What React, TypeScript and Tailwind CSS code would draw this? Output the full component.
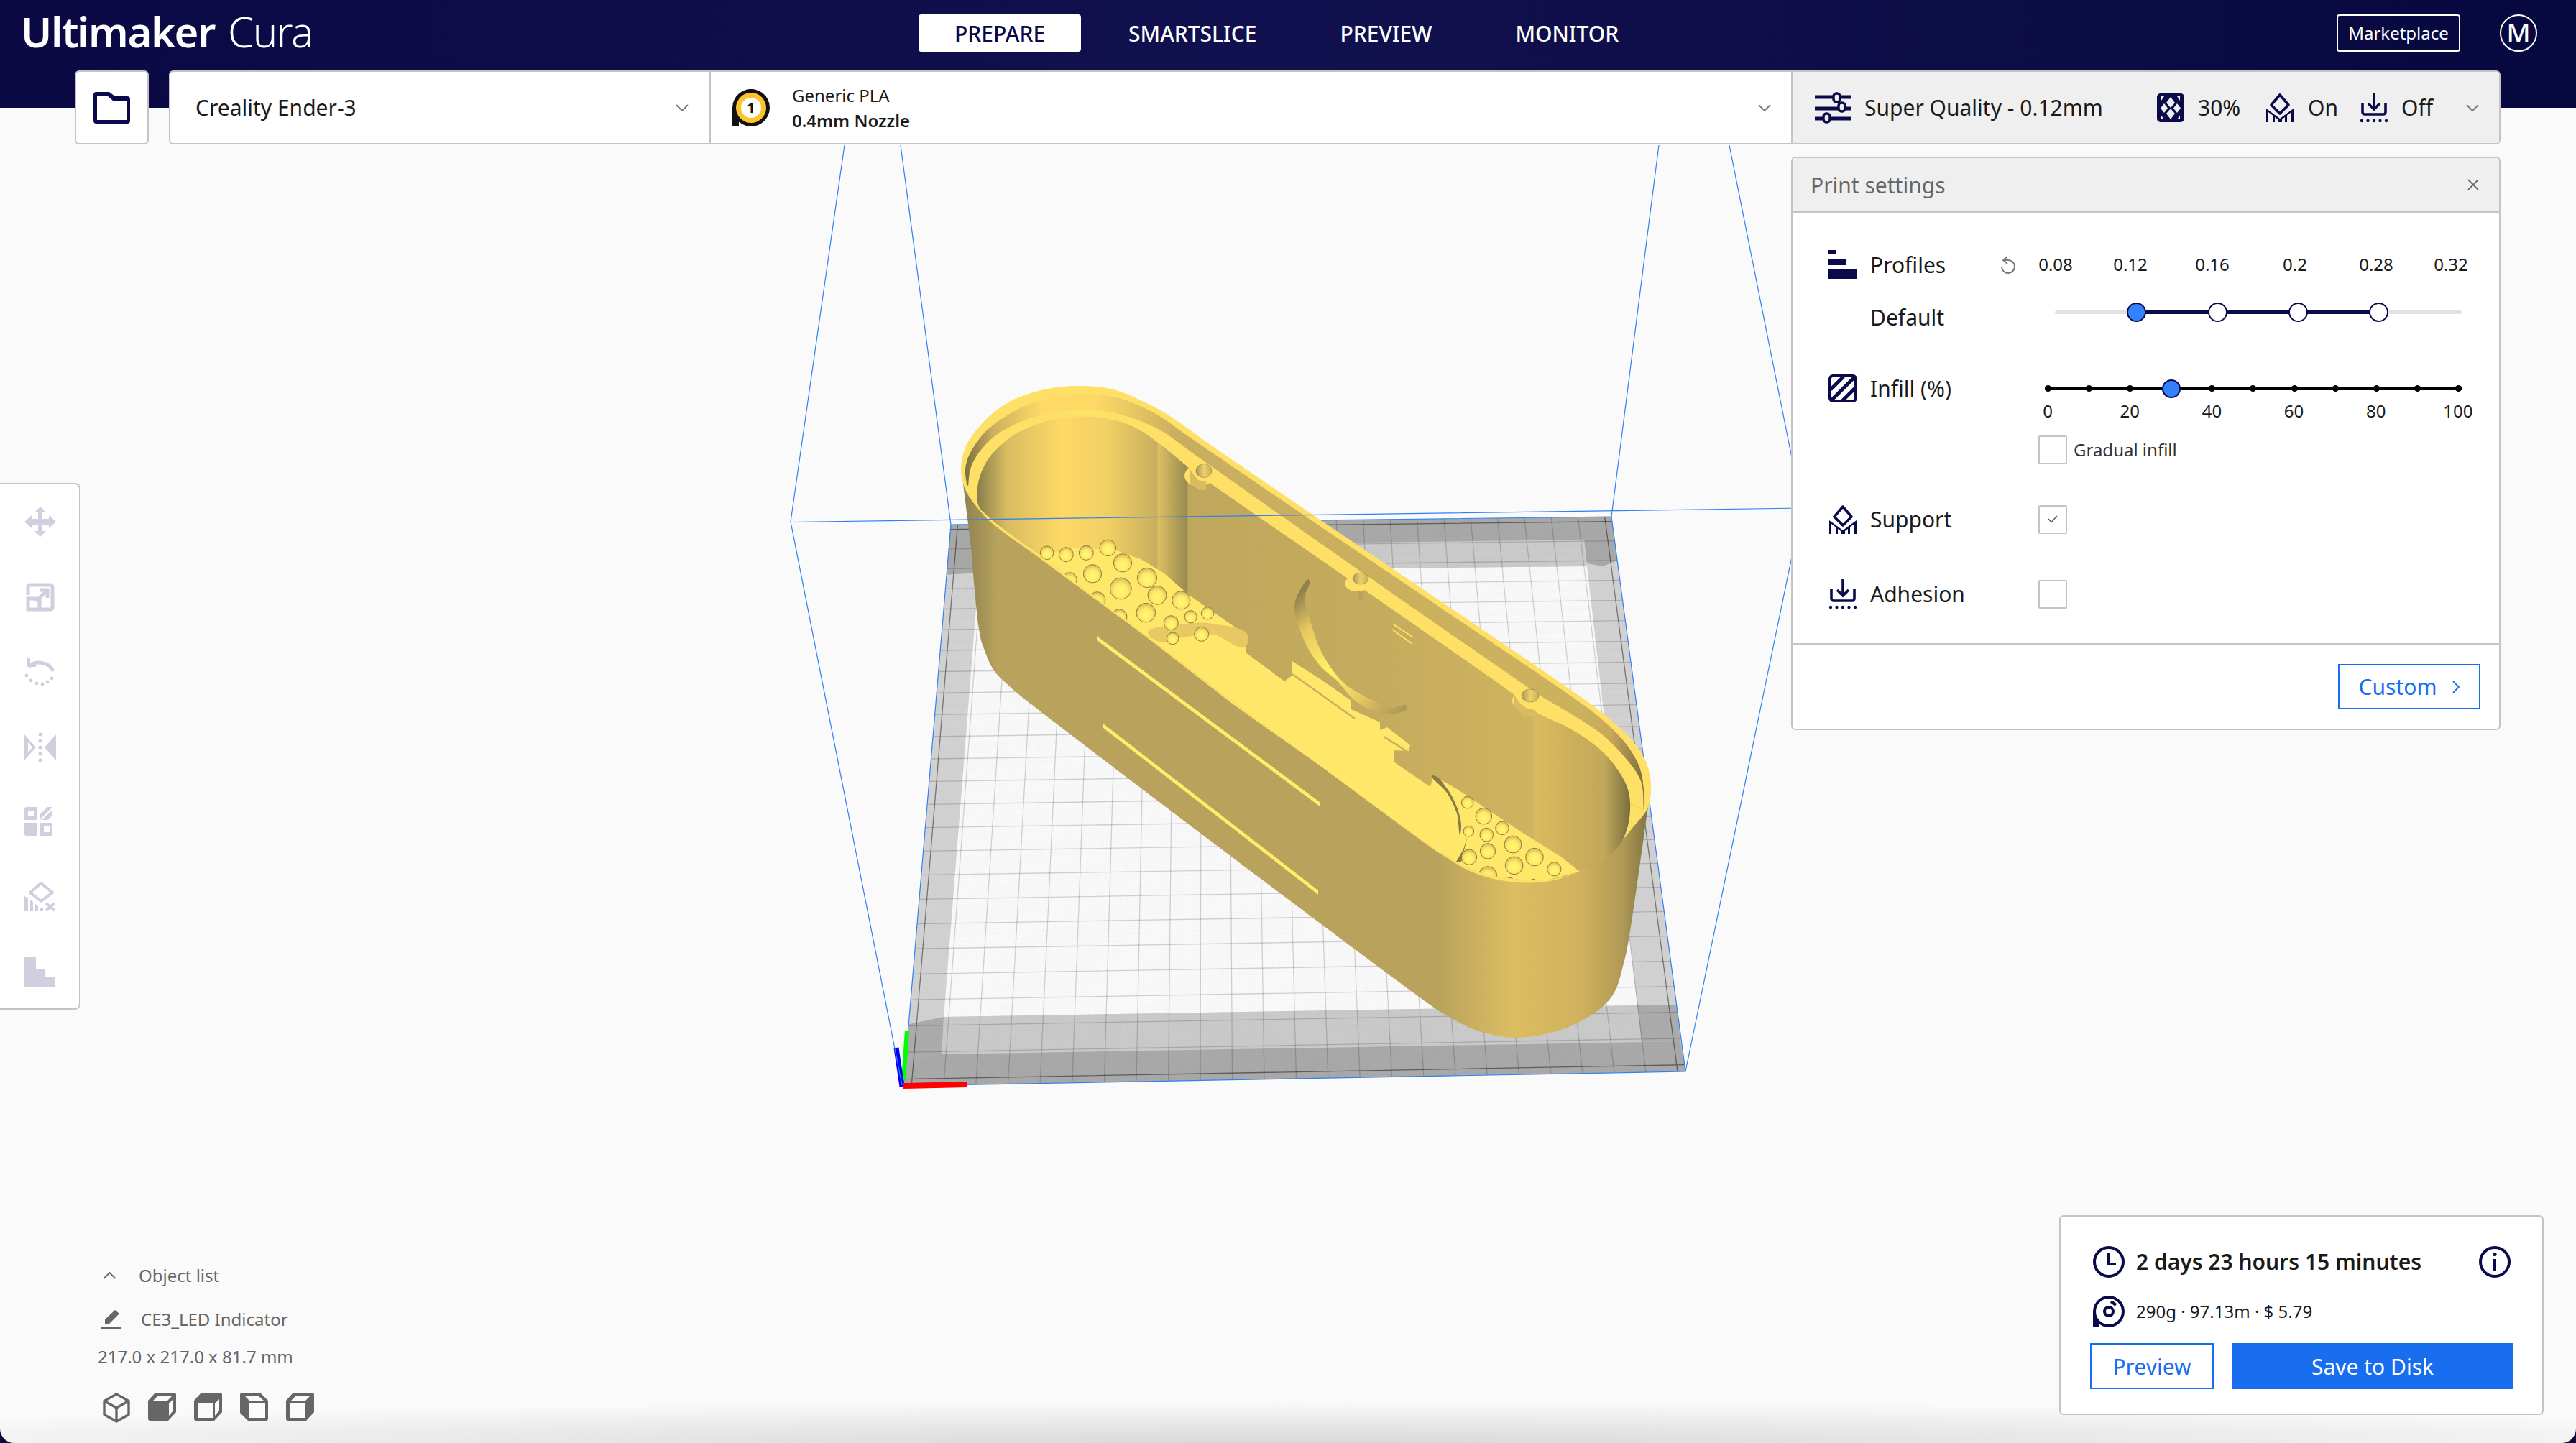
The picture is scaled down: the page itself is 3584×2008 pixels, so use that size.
import { FC } from "react";

type Pt = number[];

const NAVY = "#0a0a4a";

const unit = (x: number, y: number) => {
  const l = Math.hypot(x, y) || 1;
  return [x / l, y / l];
};

// smooth outline through the points; short handles so the long straight runs stay straight
const smooth = (pts: Pt[], closed = true) => {
  const n = pts.length;
  const tangent = (i: number) => {
    if (!closed && (i === 0 || i === n - 1)) {
      const a = pts[i === 0 ? 0 : n - 2];
      const b = pts[i === 0 ? 1 : n - 1];
      return unit(b[0] - a[0], b[1] - a[1]);
    }
    const p = pts[(i - 1 + n) % n];
    const c = pts[i];
    const q = pts[(i + 1) % n];
    const l1 = Math.hypot(c[0] - p[0], c[1] - p[1]);
    const l2 = Math.hypot(q[0] - c[0], q[1] - c[1]);
    return unit((c[0] - p[0]) * (l2 / l1) + (q[0] - c[0]) * (l1 / l2), (c[1] - p[1]) * (l2 / l1) + (q[1] - c[1]) * (l1 / l2));
  };
  let d = `M${pts[0][0]} ${pts[0][1]}`;
  const last = closed ? n : n - 1;
  for (let i = 0; i < last; i++) {
    const a = pts[i];
    const j = (i + 1) % n;
    const b = pts[j];
    const l = Math.min(Math.hypot(b[0] - a[0], b[1] - a[1]) / 3, 24);
    const t1 = tangent(i);
    const t2 = tangent(j);
    d += `C${a[0] + t1[0] * l} ${a[1] + t1[1] * l} ${b[0] - t2[0] * l} ${b[1] - t2[1] * l} ${b[0]} ${b[1]}`;
  }
  return d + "Z";
};

const poly = (pts: Pt[]) => pts.map((p) => p.join(",")).join(" ");

// plate corners: back left, back right, front right, front left
const plate: Pt[] = [
  [1323, 730],
  [2242, 719],
  [2345, 1491],
  [1257, 1511],
];

const project = (u: number, v: number) => {
  const [[x0, y0], [x1, y1], [x2, y2], [x3, y3]] = plate;
  const dx1 = x1 - x2;
  const dx2 = x3 - x2;
  const dx3 = x0 - x1 + x2 - x3;
  const dy1 = y1 - y2;
  const dy2 = y3 - y2;
  const dy3 = y0 - y1 + y2 - y3;
  const den = dx1 * dy2 - dx2 * dy1;
  const g = (dx3 * dy2 - dx2 * dy3) / den;
  const h = (dx1 * dy3 - dx3 * dy1) / den;
  const a = x1 - x0 + g * x1;
  const b = x3 - x0 + h * x3;
  const d = y1 - y0 + g * y1;
  const e = y3 - y0 + h * y3;
  const w = g * u + h * v + 1;
  return [(a * u + b * v + x0) / w, (d * u + e * v + y0) / w];
};

const gridLine = (t: number, vertical: boolean) => {
  const a = vertical ? project(t, 0) : project(0, t);
  const b = vertical ? project(t, 1) : project(1, t);
  return `M${a[0]} ${a[1]}L${b[0]} ${b[1]}`;
};

const CELLS = 24.5;
const majors = Array.from({ length: 25 }, (_, i) => (0.25 + i) / CELLS);
const minors = Array.from({ length: 245 }, (_, i) => i / 245);

const rimOuter: Pt[] = [
  [1340, 673], [1337, 653], [1343, 623], [1363, 593], [1403, 560], [1453, 542], [1503, 537], [1553, 543],
  [1587, 557], [1613, 570], [1687, 621], [1860, 739], [2067, 879], [2223, 987], [2247, 1007], [2273, 1033],
  [2290, 1060], [2297, 1100], [2293, 1123], [2273, 1150], [2240, 1187], [2198, 1213], [2140, 1228], [2113, 1228],
  [2047, 1213], [2007, 1190], [1840, 1068], [1720, 983], [1593, 885], [1447, 777], [1367, 715],
];

const body: Pt[] = [
  [1340, 673], [1350, 753], [1367, 897], [1383, 933], [1410, 960], [2004, 1408], [2050, 1432], [2104, 1444],
  [2187, 1427], [2243, 1386], [2261, 1333], [2293, 1123], [2297, 1100],
];

const step: Pt[] = [
  [1345, 675], [1343, 653], [1363, 610], [1403, 577], [1453, 555], [1503, 548], [1553, 553], [1603, 573],
  [1653, 607], [1860, 748], [2067, 888], [2218, 992], [2244, 1015], [2268, 1043], [2282, 1070], [2287, 1100],
  [2287, 1127],
];

const ledge: Pt[] = [
  [1347, 677], [1350, 653], [1370, 620], [1413, 590], [1463, 575], [1520, 570], [1570, 580], [1613, 598],
  [1663, 633], [1840, 758], [2140, 966], [2230, 1023], [2260, 1053], [2283, 1087], [2287, 1127],
];

const interior: Pt[] = [
  [1363, 707], [1360, 680], [1370, 647], [1400, 613], [1453, 587], [1520, 580], [1573, 592], [1610, 615],
  [1653, 650], [1897, 820], [2107, 967], [2133, 988], [2190, 1017], [2240, 1057], [2267, 1107], [2268, 1127],
  [2257, 1170], [2198, 1213], [2140, 1225], [2107, 1223], [2047, 1210], [2007, 1188], [1840, 1068], [1720, 980],
  [1593, 883], [1447, 773], [1373, 717],
];

const floor: Pt[] = [
  [1447, 773], [1497, 762], [1553, 766], [1587, 778], [1620, 798], [1653, 827], [1710, 867], [1737, 885],
  [1733, 897], [1733, 908], [1787, 948], [1798, 940], [1798, 920], [1840, 947], [1880, 975], [1880, 987],
  [1920, 1005], [1920, 1016], [1930, 1012], [1962, 1037], [1960, 1045], [1939, 1044], [1939, 1060], [1990, 1095],
  [1994, 1079], [2027, 1098], [2090, 1140], [2117, 1158], [2173, 1193], [2198, 1213], [2140, 1228], [2107, 1226],
  [2047, 1213], [2007, 1190], [1840, 1070], [1720, 983], [1593, 885],
];

const bumps = [
  ...[
    [410, 748, 28], [490, 755, 30], [574, 748, 30], [664, 727, 34], [726, 790, 38], [600, 835, 38], [828, 852, 41],
    [718, 897, 45], [870, 925, 39], [970, 946, 38], [823, 998, 40], [1080, 1000, 26], [1010, 1015, 26], [928, 1040, 30],
    [505, 860, 30], [620, 945, 34], [712, 1015, 32], [935, 1105, 25], [1055, 1087, 30],
  ].map(([x, y, r]) => [1320 + x / 3, 520 + y / 3, r / 3]),
  ...[
    [605, 1130, 25], [673, 1187, 34], [750, 1237, 28], [685, 1265, 28], [610, 1250, 22], [795, 1305, 36], [690, 1333, 32],
    [612, 1358, 32], [885, 1358, 37], [800, 1393, 37], [967, 1408, 29], [690, 1435, 38], [782, 1462, 18], [880, 1465, 15],
  ].map(([x, y, r]) => [1840 + x / 3, 740 + y / 3, r / 3]),
];

const Scene: FC = () => (
  <svg className="absolute left-0 top-[-150px]" width={3584} height={2008} viewBox="0 0 3584 2008" fill="none">
    <defs>
      <linearGradient id="bodyG" gradientUnits="userSpaceOnUse" x1="1340" y1="0" x2="2295" y2="0">
        <stop offset="0" stopColor="#8e8250" />
        <stop offset="0.05" stopColor="#b8a25c" />
        <stop offset="0.69" stopColor="#b8a25c" />
        <stop offset="0.8" stopColor="#dcbd62" />
        <stop offset="0.9" stopColor="#d0b25e" />
        <stop offset="0.96" stopColor="#b09a56" />
        <stop offset="1" stopColor="#7f7242" />
      </linearGradient>
      <linearGradient id="stepG" gradientUnits="userSpaceOnUse" x1="1345" y1="0" x2="2287" y2="0">
        <stop offset="0" stopColor="#7f7442" />
        <stop offset="0.04" stopColor="#cdb15e" />
        <stop offset="0.11" stopColor="#ffd966" />
        <stop offset="0.19" stopColor="#ffd966" />
        <stop offset="0.26" stopColor="#e0c262" />
        <stop offset="0.31" stopColor="#c8ae5e" />
        <stop offset="0.9" stopColor="#cdb25e" />
        <stop offset="0.95" stopColor="#c8a95a" />
        <stop offset="1" stopColor="#7d7040" />
      </linearGradient>
      <linearGradient id="wallG" gradientUnits="userSpaceOnUse" x1="1360" y1="0" x2="2268" y2="0">
        <stop offset="0" stopColor="#8a7f4c" />
        <stop offset="0.045" stopColor="#d8bc60" />
        <stop offset="0.13" stopColor="#ffd966" />
        <stop offset="0.2" stopColor="#f0cf64" />
        <stop offset="0.275" stopColor="#c8ae5e" />
        <stop offset="0.277" stopColor="#dcbf62" />
        <stop offset="0.32" stopColor="#9a8b50" />
        <stop offset="0.323" stopColor="#bfa75c" />
        <stop offset="0.6" stopColor="#c4ab5d" />
        <stop offset="0.85" stopColor="#cfb45f" />
        <stop offset="0.855" stopColor="#dabb5f" />
        <stop offset="0.91" stopColor="#cdb05c" />
        <stop offset="0.96" stopColor="#c2a85a" />
        <stop offset="1" stopColor="#7a6e40" />
      </linearGradient>
      <linearGradient id="discG" gradientUnits="userSpaceOnUse" x1="1815" y1="820" x2="1960" y2="985">
        <stop offset="0" stopColor="#8f8150" />
        <stop offset="0.2" stopColor="#e8c862" />
        <stop offset="0.5" stopColor="#fff368" />
        <stop offset="0.75" stopColor="#e8c862" />
        <stop offset="1" stopColor="#a8965a" />
      </linearGradient>
      <linearGradient id="holeG" x1="0" y1="0" x2="1" y2="0">
        <stop offset="0" stopColor="#a8965a" />
        <stop offset="0.5" stopColor="#ecd06a" />
        <stop offset="1" stopColor="#c9ae5e" />
      </linearGradient>
      <radialGradient id="bumpG" cx="0.5" cy="0.6" r="0.55">
        <stop offset="0" stopColor="#fffb73" />
        <stop offset="0.6" stopColor="#ffe968" />
        <stop offset="1" stopColor="#d9bf5b" />
      </radialGradient>
      <clipPath id="interiorClip">
        <path d={smooth(interior)} />
      </clipPath>
      <clipPath id="plateClip">
        <polygon points={poly(plate)} />
      </clipPath>
    </defs>

    {/* build plate */}
    <polygon points={poly(plate)} fill="#d2d2d2" />
    <polygon points="1362,796 2208,788 2278,1399 1313,1415" fill="#f9f9f9" />
    <g clipPath="url(#plateClip)">
      <polygon points="1323,730 2242,719 2248,752 1318,764" fill="#a9a9a9" />
      <polygon points="1364,762 2204,751 2208,788 1362,796" fill="#cbcbcb" />
      <polygon points="1318,764 1364,762 1362,797 1314,800" fill="#a9a9a9" />
      <polygon points="2204,750 2248,752 2250,780 2230,788 2208,784" fill="#a9a9a9" />
      <polygon points="1313,1415 2278,1399 2284,1450 1310,1467" fill="#cacaca" />
      <polygon points="1257,1511 2345,1491 2338,1449 1262,1468" fill="#a9a9a9" />
      <polygon points="1265,1425 1313,1415 1310,1467 1261,1477" fill="#acacac" />
      <polygon points="2278,1399 2333,1398 2338,1449 2284,1450" fill="#acacac" />
      {minors.map((t) => (
        <path key={`m${t}`} d={gridLine(t, true) + gridLine(t, false)} stroke="#000" strokeOpacity="0.014" strokeWidth="1" />
      ))}
      {majors.map((t, i) => {
        const edge = i === 0 || i === 24;
        return (
          <path
            key={`g${i}`}
            d={gridLine(t, true) + gridLine(t, false)}
            stroke="#000"
            strokeOpacity={edge ? 0.45 : 0.17}
            strokeWidth="1.3"
          />
        );
      })}
    </g>
    <polygon points={poly(plate)} stroke="#2f7ff5" strokeWidth="1.2" />

    {/* axes */}
    <path d="M1262 1434L1257 1503" stroke="#00ff00" strokeWidth="6" />
    <path d="M1247 1458L1255 1512" stroke="#0000ff" strokeWidth="7" />
    <path d="M1256 1511L1346 1509" stroke="#ff0000" strokeWidth="8" />

    {/* model */}
    <path d={smooth(body, false)} fill="url(#bodyG)" />
    <path d={smooth(rimOuter)} fill="#ffe066" />
    <path d={smooth(step, false)} fill="url(#stepG)" />
    <path d={smooth(ledge, false)} fill="#ffe066" />
    <path d={smooth(interior)} fill="url(#wallG)" />
    <g clipPath="url(#interiorClip)">
      <polygon points={poly(floor)} fill="#ffe76a" />
      <path d={smooth([[1598, 883], [1637, 870], [1687, 868], [1737, 890], [1735, 897], [1687, 883], [1640, 888], [1613, 893]])} fill="#e8c862" />
      <path d="M1798 938L1885 1000M1925 1025L1960 1047" stroke="#c9ae5e" strokeWidth="2.5" />
      <path d={smooth([[1994, 1079], [2013, 1097], [2027, 1123], [2033, 1150], [2032, 1160], [2027, 1132], [2013, 1103]])} fill="#8a7c46" />
      <polygon points="2042,1163 2036,1182 2026,1199 2033,1200" fill="#8a7c46" />
      {bumps.map(([x, y, r], i) => (
        <circle key={i} cx={x} cy={y} r={r} fill="url(#bumpG)" stroke="#766a36" strokeWidth="0.8" />
      ))}
    </g>

    {/* disc cutout in the back wall */}
    <path
      d={smooth([[1822, 809], [1802, 837], [1810, 880], [1840, 930], [1860, 947], [1883, 973], [1923, 993], [1940, 993], [1958, 983], [1937, 985], [1907, 973], [1873, 953], [1840, 910], [1822, 860], [1815, 830]])}
      fill="url(#discG)"
    />
    <path d="M1939 869L1965 886M1937 876L1965 896" stroke="#ffe568" strokeWidth="1.6" />

    {/* screw bosses */}
    <ellipse cx="1668" cy="662" rx="20" ry="15" fill="#ffe066" />
    <polygon points="1655,653 1656,672 1668,682 1678,682 1678,670 1667,668" fill="#d8bc60" />
    <ellipse cx="1675" cy="655" rx="11" ry="9.5" fill="url(#holeG)" stroke="#8a7c46" strokeWidth="0.6" />
    <ellipse cx="1888" cy="812" rx="17" ry="11" fill="#ffe066" />
    <polygon points="1890,822 1896,826 1896,836 1890,835" fill="#b8a25c" />
    <ellipse cx="1893" cy="805" rx="11" ry="8" fill="url(#holeG)" stroke="#8a7c46" strokeWidth="0.6" />
    <ellipse cx="2122" cy="975" rx="18" ry="13" fill="#ffe066" />
    <polygon points="2107,967 2107,983 2120,997 2135,997 2135,988 2123,985 2113,977" fill="#d8bc60" />
    <ellipse cx="2129" cy="968" rx="12" ry="9" fill="url(#holeG)" stroke="#8a7c46" strokeWidth="0.6" />

    {/* slots in the front wall */}
    <polygon points="1526,885 1836,1116 1836,1122 1526,891" fill="#ffec6a" />
    <polygon points="1535,1007 1834,1239 1834,1245 1535,1013" fill="#ffec6a" />

    {/* print volume */}
    <path
      d="M1100 726L1175 202M1100 726L1255 1510M1100 726.5L2507 707M1253 202L1323 730M2308 202L2242 719M2406 202L2507 707L2345 1491"
      stroke="#2f7ff5"
      strokeWidth="1.2"
    />
  </svg>
);

const Chevron: FC<{ dir?: "down" | "up" | "right"; className?: string; color?: string }> = ({ dir = "down", className, color = "#777777" }) => {
  const d = dir === "down" ? "M1 1L9 9L17 1" : dir === "up" ? "M1 9L9 1L17 9" : "M1 1L9 9L1 17";
  const box = dir === "right" ? "0 0 10 18" : "0 0 18 10";
  return (
    <svg className={className} viewBox={box} fill="none">
      <path d={d} stroke={color} strokeWidth="1.8" />
    </svg>
  );
};

const FolderIcon = () => (
  <svg width="51" height="44" viewBox="0 0 51 44">
    <path
      fill={NAVY}
      fillRule="evenodd"
      d="M4 0H22L30 6H47a4 4 0 0 1 4 4V40a4 4 0 0 1-4 4H4a4 4 0 0 1-4-4V4a4 4 0 0 1 4-4zM5 5V39H46V12H27L19 5z"
    />
  </svg>
);

const SpoolBadge = () => (
  <svg width="52" height="52" viewBox="0 0 52 52">
    <path d="M0 52V26a26 26 0 1 1 9 19.6V52z" fill="#111" />
    <circle cx="26" cy="26" r="21" fill="#fcc42a" />
    <circle cx="26" cy="26" r="14" fill="#fff" />
    <text x="26" y="33" textAnchor="middle" fontSize="20" fontWeight="700" fill="#111" fontFamily="Noto Sans">
      1
    </text>
  </svg>
);

const SlidersIcon = () => (
  <svg width="51" height="44" viewBox="0 0 51 44" fill="none">
    <path d="M0 7H51M0 23H51M0 37H51" stroke={NAVY} strokeWidth="5" />
    <rect x="26" y="2" width="9" height="12" rx="4" fill="#efefef" stroke={NAVY} strokeWidth="3.5" />
    <rect x="33" y="15" width="9" height="12" rx="4" fill="#efefef" stroke={NAVY} strokeWidth="3.5" />
    <rect x="12" y="30" width="9" height="12" rx="4" fill="#efefef" stroke={NAVY} strokeWidth="3.5" />
  </svg>
);

const LatticeIcon = () => (
  <svg width="38" height="40" viewBox="0 0 38 40">
    <rect width="38" height="40" rx="5" fill={NAVY} />
    <g fill="#efefef">
      <polygon points="19,5 25,13 19,20 13,13" />
      <polygon points="19,21 25,28 19,36 13,28" />
      <polygon points="10,14 15,20.5 10,27 5,20.5" />
      <polygon points="28,14 33,20.5 28,27 23,20.5" />
      <polygon points="6,4 10,4 6,10" />
      <polygon points="28,4 32,4 32,10" />
      <polygon points="6,31 10,36 6,36" />
      <polygon points="32,31 32,36 28,36" />
    </g>
  </svg>
);

const SupportIcon: FC<{ color?: string }> = ({ color = NAVY }) => (
  <svg width="40" height="41" viewBox="0 0 40 41" fill="none">
    <path d="M20 3L32 17L20 29L8 17z" stroke={color} strokeWidth="3.6" strokeLinejoin="round" />
    <path
      fill={color}
      d="M1 22L20 36L39 22V41H36V27L30 31.5V41H27V34L23 37V41H17V37L13 34V41H10V31.5L4 27V41H1z"
    />
  </svg>
);

const AdhesionIcon = () => (
  <svg width="40" height="42" viewBox="0 0 40 42" fill="none">
    <path d="M20 0V22M12 15L20 23L28 15" stroke={NAVY} strokeWidth="3.6" />
    <path d="M4 14V27a3 3 0 0 0 3 3H33a3 3 0 0 0 3-3V14" stroke={NAVY} strokeWidth="3.6" />
    <g fill={NAVY}>
      {[3, 11.5, 20, 28.5, 37].map((x) => (
        <circle key={x} cx={x} cy="39" r="2.2" />
      ))}
    </g>
  </svg>
);

const ProfilesIcon = () => (
  <svg width="40" height="40" viewBox="0 0 40 40" fill={NAVY}>
    <rect width="11" height="6" />
    <rect y="12" width="24" height="9" />
    <rect y="27" width="40" height="13" />
  </svg>
);

const StripesIcon = () => (
  <svg width="40" height="39" viewBox="0 0 40 39" fill="none">
    <rect x="2" y="2" width="36" height="35" rx="4" fill="#fff" stroke={NAVY} strokeWidth="4" />
    <path d="M3 21L21 3M3 37L37 3M19 37L37 19" stroke={NAVY} strokeWidth="5" />
  </svg>
);

const ResetIcon = () => (
  <svg width="22" height="25" viewBox="0 0 22 25" fill="none">
    <path d="M10 1L4 6L10 11" stroke="#777" strokeWidth="2" />
    <path d="M5 6H11a9 9 0 1 1-9 9.5" stroke="#777" strokeWidth="2" />
  </svg>
);

const Checkbox: FC<{ checked?: boolean }> = ({ checked }) => (
  <div className="flex h-[40px] w-[40px] shrink-0 items-center justify-center rounded-[2px] border-2 border-[#c4c4c4] bg-white">
    {checked && (
      <svg width="14" height="11" viewBox="0 0 14 11" fill="none">
        <path d="M1 5L5 9.5L13 1" stroke="#555" strokeWidth="1.4" />
      </svg>
    )}
  </div>
);

const TOOL = "#d0cfe0";

const tools = [
  <path key="a" fill={TOOL} d="M22 0L30 8H25V17H34V12L44 21L34 30V25H25V34H30L22 42L14 34H19V25H10V30L0 21L10 12V17H19V8H14z" />,
  <g key="b" fill="none" stroke={TOOL} strokeWidth="5">
    <path d="M5 18V7a3 3 0 0 1 3-3H36a3 3 0 0 1 3 3V35a3 3 0 0 1-3 3H22" />
    <rect x="5" y="23" width="16" height="15" />
    <path d="M16 27L32 11M21 11H32V22" />
  </g>,
  <g key="c" fill={TOOL}>
    <path d="M3 2H8V9H16V14H3z" />
    <path d="M6 14C14 5 34 6 40 20" fill="none" stroke={TOOL} strokeWidth="5" />
    <circle cx="3" cy="26" r="2.4" />
    <circle cx="9" cy="33" r="2.4" />
    <circle cx="17" cy="37" r="2.4" />
    <circle cx="25" cy="38" r="2.4" />
    <circle cx="32" cy="35" r="2.4" />
    <circle cx="38" cy="30" r="2.4" />
  </g>,
  <g key="d" fill={TOOL}>
    <path fillRule="evenodd" d="M0 3L16 21L0 39zM5 14V28L11 21z" />
    <path d="M44 3V39L28 21z" />
    <circle cx="22" cy="3" r="2.6" />
    <circle cx="22" cy="12" r="2.6" />
    <circle cx="22" cy="21" r="2.6" />
    <circle cx="22" cy="30" r="2.6" />
    <circle cx="22" cy="39" r="2.6" />
  </g>,
  <g key="e" fill={TOOL}>
    <path fillRule="evenodd" d="M3 0H18V18H0V3a3 3 0 0 1 3-3zM5 5V13H13V5z" />
    <path d="M0 22H18V40H3a3 3 0 0 1-3-3z" />
    <path fillRule="evenodd" d="M22 22H39V37a3 3 0 0 1-3 3H22zM27 27V35H35V27z" />
    <path d="M22 10L32 0H39L22 17zM24 18L39 4V12L32 18z" />
  </g>,
  <g key="f" transform="translate(0 -2)">
    <path d="M23 3L39 16L23 28L8 16z" fill="none" stroke={TOOL} strokeWidth="4" strokeLinejoin="round" />
    <path fill={TOOL} d="M0 21L5 24V42H0zM8 26L12 29V42H8zM15 32L19 35V42H15zM21 37H26V42H21z" />
    <path d="M30 31L42 41M42 31L30 41" stroke={TOOL} strokeWidth="4" />
  </g>,
  <path key="g" fill={TOOL} d="M0 0H16V16H28V28H42V42H0z" />,
];

const CUBE = "#666666";
const BG = "#fafafa";
const hexOuter = "M10 0H36a3 3 0 0 1 3 3V27L28 39H3a3 3 0 0 1-3-3V11z";
const topFace = <polygon points="13,5 33,5 27,11 7,11" fill={BG} />;
const rightFace = <polygon points="29,15 35,9 35,25 29,32" fill={BG} />;
const frontFace = <rect x="5" y="14" width="21" height="21" fill={BG} />;

const cubes = [
  <g key="1" fill="none" stroke={CUBE} strokeWidth="3.4" strokeLinejoin="round">
    <path d="M20 2L37 11.5V30.5L20 40L3 30.5V11.5z" />
    <path d="M3 11.5L20 21L37 11.5M20 21V40" />
  </g>,
  <g key="2">
    <path d={hexOuter} fill={CUBE} />
    {topFace}
    {rightFace}
  </g>,
  <g key="3">
    <path d={hexOuter} fill={CUBE} />
    {frontFace}
    {rightFace}
  </g>,
  <g key="4">
    <path d="M3 0H28L39 11V36a3 3 0 0 1-3 3H11L0 28V3a3 3 0 0 1 3-3z" fill={CUBE} />
    <polygon points="7,5 26,5 33,11 13,11" fill={BG} />
    <rect x="13" y="14" width="22" height="21" fill={BG} />
  </g>,
  <g key="5">
    <path d={hexOuter} fill={CUBE} />
    {topFace}
    {frontFace}
  </g>,
];

const tabs = ["PREPARE", "SMARTSLICE", "PREVIEW", "MONITOR"];

const profileLabels = [
  { text: "0.08", cls: "w-[80px]" },
  { text: "0.12", cls: "w-[128px]" },
  { text: "0.16", cls: "w-[100px]" },
  { text: "0.2", cls: "w-[130px]" },
  { text: "0.28", cls: "w-[96px]" },
  { text: "0.32", cls: "w-[112px]" },
];

const App: FC = () => {
  return (
    <div className="relative flex h-[2008px] w-[3584px] flex-col overflow-hidden bg-[#0a0940] font-['Noto_Sans',sans-serif] text-[#1a1a1a]">
      {/* top bar */}
      <header className="relative z-20 h-[150px] shrink-0 bg-gradient-to-r from-[#0a0944] via-[#12114f] to-[#080840]">
        <div className="flex h-[98px] items-start pt-[18px]">
          <div className="flex h-[52px] w-[1278px] items-center pl-[29px] text-[58px] leading-none tracking-[-1.4px] text-white">
            <span className="font-semibold">Ultimaker</span>
            <span className="ml-[18px] font-light">Cura</span>
          </div>
          <nav className="mt-[2px] flex gap-4">
            {tabs.map((tab, i) => (
              <div
                key={tab}
                className={
                  i === 0
                    ? "flex h-[52px] items-center rounded-[4px] bg-white px-[50px] text-[30px] font-medium text-[#0a0a4a]"
                    : "flex h-[52px] items-center px-[50px] text-[30px] font-medium text-white"
                }
              >
                {tab}
              </div>
            ))}
          </nav>
          <div className="ml-auto mt-[2px] flex items-center gap-[55px] pr-[54px]">
            <div className="flex h-[52px] w-[172px] items-center justify-center rounded-[4px] border-2 border-white text-[24px] text-white">
              Marketplace
            </div>
            <div className="flex h-[52px] w-[52px] items-center justify-center rounded-full border-2 border-white text-[36px] font-medium text-white">
              M
            </div>
          </div>
        </div>

        {/* stage bar */}
        <div className="flex h-[103px] pl-[104px]">
          <div className="flex w-[103px] items-center justify-center rounded-[6px] border-2 border-[#c4c4c4] bg-white">
            <FolderIcon />
          </div>
          <div className="ml-[28px] flex w-[3244px] rounded-[6px] border-2 border-[#c4c4c4] bg-white">
            <div className="flex w-[750px] items-center pl-[35px] pr-[29px] text-[30px]">
              <span>Creality Ender-3</span>
              <Chevron className="ml-auto h-[10px] w-[18px]" />
            </div>
            <div className="flex w-[1505px] items-center border-l-2 border-[#c4c4c4] pl-[30px] pr-[28px]">
              <SpoolBadge />
              <div className="ml-[31px] flex flex-col gap-[3px] text-[24px] leading-[32px]">
                <span className="mt-[1px]">Generic PLA</span>
                <span className="font-semibold">0.4mm Nozzle</span>
              </div>
              <Chevron className="ml-auto h-[10px] w-[18px]" />
            </div>
            <div className="flex flex-1 items-center rounded-r-[6px] border-l-2 border-[#c4c4c4] bg-[#efefef] pl-[31px] pr-[28px] text-[30px]">
              <SlidersIcon />
              <span className="ml-[18px] w-[407px]">Super Quality - 0.12mm</span>
              <LatticeIcon />
              <span className="ml-[19px] w-[94px]">30%</span>
              <SupportIcon />
              <span className="ml-[19px] w-[72px]">On</span>
              <AdhesionIcon />
              <span className="ml-[18px]">Off</span>
              <Chevron className="ml-auto h-[10px] w-[18px]" />
            </div>
          </div>
        </div>
      </header>

      {/* viewport */}
      <main className="relative flex flex-1 justify-between overflow-hidden rounded-b-[20px] bg-[#fafafa] bg-[radial-gradient(ellipse_2300px_58px_at_50%_100%,#d8d8d8,#fafafa)]">
        <Scene />

        <div className="relative flex flex-col">
          <div className="mt-[522px] flex h-[733px] w-[112px] flex-col items-center gap-[62.5px] rounded-r-[8px] border-y-2 border-r-2 border-[#c4c4c4] bg-white pl-[2px] pt-[31px]">
            {tools.map((icon, i) => (
              <svg key={i} width="44" height="42" viewBox="0 0 44 42">
                {icon}
              </svg>
            ))}
          </div>

          <div className="mb-[28px] ml-[136px] mt-auto flex flex-col text-[24px] leading-[30px] text-[#666]">
            <div className="flex h-[30px] items-center pl-[7px]">
              <Chevron dir="up" className="h-[10px] w-[19px]" color="#666" />
              <span className="ml-[31px]">Object list</span>
            </div>
            <div className="mt-[31px] flex h-[30px] items-center pl-[4px]">
              <svg width="28" height="26" viewBox="0 0 28 26">
                <path fill="#666" d="M20 0L26 5L12 19H6V13zM0 23H28V26H0z" />
              </svg>
              <span className="ml-[28px]">CE3_LED Indicator</span>
            </div>
            <div className="mt-[22px] h-[30px] whitespace-nowrap">217.0 x 217.0 x 81.7 mm</div>
            <div className="mt-[35px] flex gap-[24px] pl-[6px]">
              {cubes.map((cube, i) => (
                <svg key={i} width="40" height="42" viewBox="0 0 40 42">
                  {cube}
                </svg>
              ))}
            </div>
          </div>
        </div>

        <div className="relative flex flex-col items-end">
          {/* print settings */}
          <section className="mr-[105px] mt-[68px] flex h-[798px] w-[987px] flex-col rounded-[6px] border-2 border-[#c4c4c4] bg-white">
            <div className="flex h-[76px] items-center rounded-t-[6px] border-b-2 border-[#c4c4c4] bg-[#efefef] pl-[25px] pr-[28px] text-[30px] text-[#666]">
              <span>Print settings</span>
              <svg className="ml-auto" width="16" height="16" viewBox="0 0 16 16" fill="none">
                <path d="M1 1L15 15M15 1L1 15" stroke="#666" strokeWidth="1.8" />
              </svg>
            </div>
            <div className="flex flex-1 flex-col pl-[50px] pt-[52px] text-[30px]">
              <div className="flex h-[40px] items-center">
                <ProfilesIcon />
                <span className="ml-[18px] w-[181px]">Profiles</span>
                <ResetIcon />
                <div className="ml-[15px] flex text-center text-[24px]">
                  {profileLabels.map((l) => (
                    <span key={l.text} className={l.cls}>
                      {l.text}
                    </span>
                  ))}
                </div>
              </div>
              <div className="mt-[26px] flex h-[40px] items-center">
                <span className="w-[315px] pl-[58px] pt-[14px]">Default</span>
                <div className="relative h-[5px] w-[566px] rounded-full bg-[#e2e2e2]">
                  <div className="absolute left-[113px] top-0 h-[5px] w-[337px] bg-[#0a0a4a]" />
                  <div className="absolute left-[100px] top-[-11px] h-[27px] w-[27px] rounded-full border-2 border-[#0a0a4a] bg-[#3282ff]" />
                  <div className="absolute left-[213px] top-[-11px] h-[27px] w-[27px] rounded-full border-2 border-[#0a0a4a] bg-white" />
                  <div className="absolute left-[325px] top-[-11px] h-[27px] w-[27px] rounded-full border-2 border-[#0a0a4a] bg-white" />
                  <div className="absolute left-[437px] top-[-11px] h-[27px] w-[27px] rounded-full border-2 border-[#0a0a4a] bg-white" />
                </div>
              </div>

              <div className="mt-[67px] flex h-[39px] items-center">
                <StripesIcon />
                <span className="ml-[18px] w-[243px]">Infill (%)</span>
                <div className="relative flex h-[4px] w-[580px] items-center justify-between bg-black">
                  {Array.from({ length: 11 }, (_, i) => (
                    <span key={i} className="h-[9px] w-[9px] rounded-full bg-black" />
                  ))}
                  <div className="absolute left-[163px] top-[-11px] h-[26px] w-[26px] rounded-full border-2 border-[#0a0a4a] bg-[#3282ff]" />
                </div>
              </div>
              <div className="ml-[248px] flex h-[24px] items-center text-center text-[24px]">
                {["0", "20", "40", "60", "80", "100"].map((l) => (
                  <span key={l} className="w-[114.4px]">
                    {l}
                  </span>
                ))}
              </div>
              <div className="ml-[292px] mt-[22px] flex items-center gap-[9px] text-[24px]">
                <Checkbox />
                <span className="text-[#333]">Gradual infill</span>
              </div>

              <div className="mt-[54px] flex items-center">
                <SupportIcon />
                <span className="ml-[18px] w-[234px]">Support</span>
                <Checkbox checked />
              </div>
              <div className="mt-[59px] flex items-center">
                <AdhesionIcon />
                <span className="ml-[18px] w-[234px]">Adhesion</span>
                <Checkbox />
              </div>
            </div>
            <div className="flex h-[119px] items-center justify-end border-t-2 border-[#c4c4c4] pr-[26px]">
              <div className="flex h-[63px] w-[198px] items-center justify-center gap-[22px] border-2 border-[#196ef0] text-[30px] text-[#196ef0]">
                <span>Custom</span>
                <Chevron dir="right" className="h-[18px] w-[10px]" color="#196ef0" />
              </div>
            </div>
          </section>

          {/* print summary */}
          <section className="mb-[39px] mr-[45px] mt-auto flex h-[278px] w-[674px] flex-col rounded-[6px] border-2 border-[#c4c4c4] bg-white pl-[41px] pr-[41px] pt-[40px]">
            <div className="ml-[4px] flex items-center">
              <svg width="44" height="44" viewBox="0 0 44 44" fill="none">
                <circle cx="22" cy="22" r="20" stroke={NAVY} strokeWidth="4" />
                <path d="M21 10V25H32" stroke={NAVY} strokeWidth="4" />
              </svg>
              <span className="ml-[16px] text-[30px] font-semibold">2 days 23 hours 15 minutes</span>
              <svg className="ml-auto mr-[3px]" width="44" height="44" viewBox="0 0 44 44" fill="none">
                <circle cx="22" cy="22" r="20" stroke={NAVY} strokeWidth="4" />
                <path d="M22 18V35" stroke={NAVY} strokeWidth="4" />
                <circle cx="22" cy="11.5" r="2.6" fill={NAVY} />
              </svg>
            </div>
            <div className="ml-[4px] mt-[25px] flex items-center">
              <svg width="44" height="44" viewBox="0 0 44 44" fill="none">
                <path fill={NAVY} fillRule="evenodd" d="M0 44V22a22 22 0 1 1 8 17V44zM22 4a18 18 0 1 0 0 36a18 18 0 0 0 0-36z" />
                <circle cx="22" cy="22" r="6" stroke={NAVY} strokeWidth="4" />
                <path d="M25 8L32 13" stroke={NAVY} strokeWidth="4" />
              </svg>
              <span className="ml-[16px] text-[24px]">290g · 97.13m · $ 5.79</span>
            </div>
            <div className="mt-[22px] flex gap-[26px] text-[30px]">
              <div className="flex h-[64px] w-[172px] items-center justify-center border-2 border-[#196ef0] text-[#196ef0]">Preview</div>
              <div className="flex h-[64px] w-[390px] items-center justify-center bg-[#196ef0] text-white">Save to Disk</div>
            </div>
          </section>
        </div>
      </main>
    </div>
  );
};

export default App;
